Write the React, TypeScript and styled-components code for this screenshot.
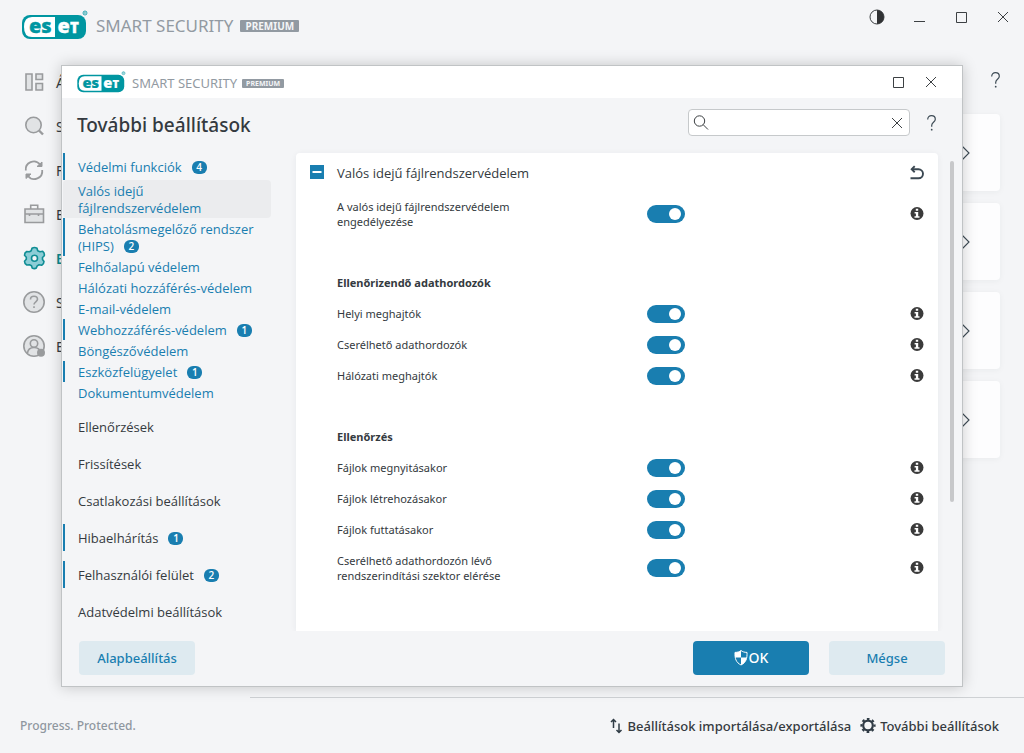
import React from "react";
import styled, { createGlobalStyle, css } from "styled-components";

const teal = "#0096a1";
const blue = "#197eb0";
const ink = "#343a40";
const narrowFont = `"Open Sans", "Noto Sans", sans-serif`;

const GlobalStyle = createGlobalStyle`
  *, *::before, *::after { box-sizing: border-box; }
  html, body { margin: 0; }
  body {
    background: #f4f5f7;
    color: ${ink};
    font-family: "Noto Sans", "Open Sans", sans-serif;
    font-size: 13px;
  }
  ul { list-style: none; margin: 0; padding: 0; }
  h1, h2, h3 { margin: 0; }
  a { color: inherit; text-decoration: none; }
  button, input { font: inherit; color: inherit; }
`;

const Page = styled.div`
  position: relative;
  display: flex;
  flex-direction: column;
  min-height: 100vh;
  overflow: hidden;
`;

const MainHeader = styled.header`
  display: flex;
  justify-content: space-between;
  align-items: flex-start;
  height: 60px;
  padding: 9px 13px 0 22px;
`;

const IconButton = styled.button`
  display: flex;
  align-items: center;
  justify-content: center;
  padding: 0;
  border: 0;
  background: none;
  cursor: pointer;
  svg { display: block; }
`;

const WindowControls = styled.div<{ $gap: number }>`
  display: flex;
  align-items: center;
  gap: ${(p) => p.$gap}px;
`;

const Brand = styled.div<{ $small?: boolean }>`
  display: flex;
  align-items: center;
  gap: ${(p) => (p.$small ? 6 : 8)}px;
  color: #929aa2;
  font-size: ${(p) => (p.$small ? 13 : 17)}px;
  line-height: ${(p) => (p.$small ? 22 : 30)}px;
  svg { display: block; overflow: visible; }
`;

const BrandName = styled.span<{ $small?: boolean }>`
  display: flex;
  align-items: center;
  gap: ${(p) => (p.$small ? 5 : 7)}px;
  padding-top: 2px;
  white-space: nowrap;
`;

const Premium = styled.span<{ $small?: boolean }>`
  padding: 0 ${(p) => (p.$small ? 4 : 5)}px;
  border-radius: 1px;
  background: #929aa2;
  color: #f4f5f7;
  font-weight: 700;
  font-size: ${(p) => (p.$small ? 7 : 10)}px;
  line-height: ${(p) => (p.$small ? 9 : 12)}px;
`;

const MainBody = styled.div`
  display: flex;
  flex: 1;
`;

const MainNav = styled.nav`
  width: 250px;
  padding-left: 22px;
`;

const MainLink = styled.a<{ $active?: boolean }>`
  display: flex;
  align-items: center;
  gap: 10px;
  height: 44px;
  font-size: 14px;
  white-space: nowrap;
  color: ${(p) => (p.$active ? "#0b8a8f" : ink)};
  font-weight: ${(p) => (p.$active ? 600 : 400)};
`;

const MainContent = styled.main`
  display: flex;
  flex: 1;
  flex-direction: column;
  padding: 12px 24px 0 0;
`;

const HelpRow = styled.div`
  display: flex;
  justify-content: flex-end;
  height: 42px;
  align-items: flex-start;
`;

const CardList = styled.div`
  display: flex;
  flex-direction: column;
  gap: 12px;
`;

const Card = styled.button`
  display: flex;
  align-items: center;
  justify-content: flex-end;
  height: 77px;
  padding: 0 30px 0 0;
  border: 0;
  border-radius: 4px;
  background: #fdfdfe;
  box-shadow: 0 1px 6px rgba(40, 50, 60, 0.05);
`;

const MainFooter = styled.footer`
  display: flex;
  justify-content: space-between;
  height: 56px;
`;

const Slogan = styled.span`
  width: 250px;
  padding-left: 20px;
  color: #8f979f;
  font-size: 12px;
  font-weight: 500;
  line-height: 58px;
`;

const FooterLinks = styled.div`
  display: flex;
  flex: 1;
  align-items: center;
  justify-content: flex-end;
  gap: 9px;
  padding-right: 25px;
  border-top: 1px solid #ced1d4;
`;

const FooterLink = styled.a`
  display: flex;
  align-items: center;
  gap: 4px;
  font-weight: 500;
  line-height: 20px;
`;

const Dialog = styled.section`
  position: absolute;
  inset: 65px 61px 66px;
  display: flex;
  flex-direction: column;
  border: 1px solid #c0c3c5;
  background: #f4f5f7;
  box-shadow: 0 0 14px rgba(0, 0, 0, 0.2);
`;

const TitleBar = styled.div`
  display: flex;
  align-items: center;
  justify-content: space-between;
  height: 32px;
  padding: 0 23px 0 15px;
  background: #fff;
`;

const DialogHeader = styled.div`
  display: flex;
  align-items: center;
  justify-content: space-between;
  height: 55px;
  padding: 0 26px 2px 15px;
`;

const DialogTitle = styled.h1`
  font-size: 19px;
  font-weight: 500;
  line-height: 28px;
`;

const HeaderTools = styled.div`
  display: flex;
  align-items: center;
  gap: 17px;
  padding-bottom: 4px;
`;

const SearchBox = styled.div`
  display: flex;
  align-items: center;
  width: 222px;
  height: 27px;
  padding: 0 4px;
  border: 1px solid #c6c9cb;
  border-radius: 4px;
  background: #fff;
`;

const SearchInput = styled.input`
  flex: 1;
  min-width: 0;
  border: 0;
  outline: 0;
  background: none;
`;

const DialogBody = styled.div`
  display: flex;
  flex: 1;
  min-height: 0;
`;

const SettingsNav = styled.nav`
  width: 234px;
  padding: 0 25px 0 1px;
  font-family: ${narrowFont};
`;

const NavLink = styled.a<{ $level: "top" | "sub"; $changed?: boolean; $selected?: boolean; $accent?: boolean }>`
  display: block;
  padding: ${(p) => (p.$level === "top" ? "6px 8px 4px 13px" : "3px 8px 1px 13px")};
  border-left: 2px solid ${(p) => (p.$changed ? blue : "transparent")};
  font-weight: 500;
  line-height: 17px;
  color: ${(p) => (p.$accent ? blue : ink)};
  ${(p) =>
    p.$selected &&
    css`
      border-radius: 4px;
      background: #ebecee;
    `}
`;

const NavList = styled.ul`
  display: flex;
  flex-direction: column;
  gap: 10px;
`;

const Badge = styled.span`
  display: inline-block;
  width: 15px;
  height: 13px;
  margin-left: 10px;
  border-radius: 6px;
  background: ${blue};
  color: #fff;
  font-size: 10px;
  font-weight: 600;
  line-height: 13px;
  text-align: center;
  vertical-align: 1px;
`;

const Panel = styled.div`
  flex: 1;
  border-radius: 4px 4px 0 0;
  background: #fff;
  box-shadow: 0 1px 6px rgba(40, 50, 60, 0.06);
  clip-path: inset(-6px -6px 0 -6px);
`;

const PanelHeader = styled.div`
  display: flex;
  align-items: center;
  gap: 13px;
  height: 38px;
  padding: 0 14px;
`;

const PanelTitle = styled.h2`
  flex: 1;
  padding-top: 2px;
  font-family: ${narrowFont};
  font-size: 13px;
  font-weight: 500;
`;

const Group = styled.section`
  padding: 0 14px 30px 41px;
`;

const GroupTitle = styled.h3`
  padding: 8px 0;
  font-size: 11px;
  font-weight: 700;
  line-height: 15px;
`;

const SettingRow = styled.div`
  display: grid;
  grid-template-columns: 310px 1fr auto;
  align-items: center;
  padding: 8px 0;
  font-size: 11px;
  line-height: 15px;
`;

const SettingLabel = styled.label`
  max-width: 210px;
`;

const Toggle = styled.input`
  appearance: none;
  display: flex;
  align-items: center;
  justify-content: flex-end;
  width: 38px;
  height: 18px;
  margin: -2px 0;
  padding: 0 4px;
  border-radius: 9px;
  background: ${blue};
  &::before {
    content: "";
    width: 12px;
    height: 12px;
    border-radius: 6px;
    background: #fff;
  }
  &:not(:checked) {
    justify-content: flex-start;
    background: #9aa1a7;
  }
`;

const ScrollTrack = styled.div`
  width: 24px;
  padding: 8px 8px 0 12px;
`;

const ScrollThumb = styled.div`
  height: 341px;
  border-radius: 2px;
  background: #c7c8ca;
`;

const DialogFooter = styled.div`
  display: flex;
  align-items: center;
  justify-content: space-between;
  height: 55px;
  padding: 0 17px 2px;
`;

const ButtonGroup = styled.div`
  display: flex;
  gap: 20px;
`;

const Button = styled.button<{ $primary?: boolean }>`
  display: flex;
  align-items: center;
  justify-content: center;
  width: 116px;
  height: 34px;
  padding: 0;
  border: 0;
  border-radius: 4px;
  background: ${(p) => (p.$primary ? blue : "#deeaf0")};
  color: ${(p) => (p.$primary ? "#fff" : blue)};
  font-size: ${(p) => (p.$primary ? 14 : 13)}px;
  font-weight: 500;
  cursor: pointer;
`;

const EsetLogo = ({ width }: { width: number }) => (
  <svg width={width} height={Math.round((width * 30) / 66)} viewBox="0 0 66 30" role="img" aria-label="ESET">
    <rect x="0" y="5" width="64" height="24" rx="8" fill={teal} />
    <path d="M33 7v20H10Q2 27 2 17T10 7z" fill="#fff" />
    <g fontFamily="Noto Sans" fontWeight="900" fontSize="20" strokeWidth=".3">
      <text x="7" y="22.500" fill={teal} stroke={teal}>es</text>
      <text x="35.500" y="22.500" fill="#fff" stroke="#fff">e<tspan fontSize="15">T</tspan></text>
    </g>
    <circle cx="63" cy="3" r="2" fill="none" stroke={teal} strokeWidth=".8" />
    <path d="M62.4 4V2.2h1q.6.5 0 1l.5.8" fill="none" stroke={teal} strokeWidth=".5" />
  </svg>
);

const BrandMark = ({ small }: { small?: boolean }) => (
  <Brand $small={small}>
    <EsetLogo width={small ? 49 : 66} />
    <BrandName $small={small}>
      SMART SECURITY <Premium $small={small}>PREMIUM</Premium>
    </BrandName>
  </Brand>
);

const Stroke = ({ size, children, w = 1 }: { size: number; children: React.ReactNode; w?: number }) => (
  <svg width={size} height={size} viewBox={`0 0 ${size} ${size}`} fill="none" stroke="#3c4043" strokeWidth={w} aria-hidden="true">
    {children}
  </svg>
);

const CloseIcon = () => (
  <Stroke size={16}><path d="M3 3l10 10M13 3L3 13" /></Stroke>
);
const MaximizeIcon = () => (
  <Stroke size={16}><path d="M3.500 3.500h10v10h-10z" /></Stroke>
);
const HelpIcon = () => (
  <svg width="9" height="16" viewBox="0 0 9 16" fill="none" stroke="#3d4b55" strokeWidth="1.200" aria-hidden="true">
    <path d="M.7 4.400C.7 2 2.300.7 4.500.7S8.300 2 8.300 4.200c0 3-3.600 3.200-3.600 6.200v1.300" />
    <circle cx="4.700" cy="14.700" r=".9" fill="#3d4b55" stroke="none" />
  </svg>
);
const ChevronIcon = () => (
  <svg width="9" height="16" viewBox="0 0 9 16" fill="none" stroke="#3d4b55" strokeWidth="1.100" aria-hidden="true">
    <path d="M.5.500L8 8 .5 15.500" />
  </svg>
);

const InfoIcon = () => (
  <svg width="14" height="14" viewBox="0 0 14 14" aria-hidden="true">
    <circle cx="7" cy="6.500" r="6.500" fill="#3a3a3a" />
    <path d="M5.800 1.800h2.400v2H5.800zM4.600 4.900h3.600v4.400h1.300v1.500H4.500V9.300h1.400V6.400H4.600z" fill="#fff" />
  </svg>
);

const NavIcon = ({ children, active }: { children: React.ReactNode; active?: boolean }) => (
  <svg width="24" height="24" viewBox="0 0 24 24" fill={active ? "#8ccdd6" : "#e1e3e5"} stroke={active ? "#0f8d94" : "#999b9d"} strokeWidth="1.600" aria-hidden="true">
    {children}
  </svg>
);

const gearPath =
  "M10 2.200Q12.500.7 15 2.200L15.700 4.700 18 5.700 20.700 5.300Q22.800 7 22.300 9.700L20.500 11.500V13.500L22 15.500Q22 18 19.700 19.300L17 18.800 15.200 19.900 14.300 22Q12.500 23.300 10.200 22L9.500 19.700 7.500 18.700 4.800 19Q2.500 17.700 2.500 15.200L4.300 13.200V11.200L2.500 9.300Q2.500 6.700 4.700 5.500L7.500 5.700 9.200 4.700z";

const mainItems = [
  { name: "Áttekintés", label: "Á", icon: <g><path d="M4 4h6v16H4zM14 4h6.500v5.500H14zM14 13.500h6.500V20H14z" /></g> },
  { name: "Számítógép ellenőrzése", label: "S", icon: <g><circle cx="11.500" cy="11" r="7.700" /><path d="M17 16.500l4 4" strokeWidth="2.400" /></g> },
  { name: "Frissítés", label: "F", icon: <g fill="none" strokeWidth="1.800"><path d="M3.800 12.500A8 8 0 0 1 18 6.500M20.200 12A8 8 0 0 1 6 18" /><path d="M20 4v4.500h-5zM4 20.500V16h5z" fill="#999b9d" strokeWidth="1" /></g> },
  { name: "Eszközök", label: "E", icon: <g><path d="M3 7h18.500v13.500H3z" /><path d="M8.700 7V3.200h7V7M3 12h18.500M7.500 12v2M16.500 12v2" fill="none" /></g> },
  { name: "Beállítások", label: "B", active: true, icon: <g><path d={gearPath} strokeLinejoin="round" /><circle cx="12.500" cy="12.200" r="3" fill="#f4f5f7" /></g> },
  { name: "Súgó és támogatás", label: "S", icon: <g><circle cx="12" cy="12" r="10.200" /><path d="M8.500 9.500C8.500 7.500 10 6.300 12 6.300s3.500 1.200 3.500 3c0 2.500-3.500 2.500-3.500 5.200" fill="none" /><path d="M12 16.200v1.800" /></g> },
  { name: "ESET HOME-fiók", label: "E", icon: <g><circle cx="12" cy="12" r="10.200" /><circle cx="12" cy="9.500" r="3.700" /><path d="M5.500 19c.5-4 3-5.500 6.500-5.500s6 1.500 6.500 5.500" fill="none" /><circle cx="19" cy="18.700" r="4" fill="#999b9d" stroke="none" /></g> },
];

const protectionItems = [
  { label: "Valós idejű fájlrendszervédelem", selected: true },
  { label: "Behatolásmegelőző rendszer (HIPS)", count: 2 },
  { label: "Felhőalapú védelem" },
  { label: "Hálózati hozzáférés-védelem" },
  { label: "E-mail-védelem" },
  { label: "Webhozzáférés-védelem", count: 1 },
  { label: "Böngészővédelem" },
  { label: "Eszközfelügyelet", count: 1 },
  { label: "Dokumentumvédelem" },
];

const otherItems = [
  { label: "Ellenőrzések" },
  { label: "Frissítések" },
  { label: "Csatlakozási beállítások" },
  { label: "Hibaelhárítás", count: 1 },
  { label: "Felhasználói felület", count: 2 },
  { label: "Adatvédelmi beállítások" },
];

const groups = [
  { title: "", rows: ["A valós idejű fájlrendszervédelem engedélyezése"] },
  { title: "Ellenőrizendő adathordozók", rows: ["Helyi meghajtók", "Cserélhető adathordozók", "Hálózati meghajtók"] },
  {
    title: "Ellenőrzés",
    rows: ["Fájlok megnyitásakor", "Fájlok létrehozásakor", "Fájlok futtatásakor", "Cserélhető adathordozón lévő rendszerindítási szektor elérése"],
  },
];

export default function App() {
  return (
    <Page>
      <GlobalStyle />
      <MainHeader>
        <BrandMark />
        <WindowControls $gap={26}>
          <IconButton aria-label="Téma">
            <Stroke size={16}><circle cx="8" cy="8" r="7" /><path d="M8 1a7 7 0 0 1 0 14z" fill="#303234" stroke="none" /></Stroke>
          </IconButton>
          <IconButton aria-label="Kis méret"><Stroke size={16}><path d="M3 12.500h11" /></Stroke></IconButton>
          <IconButton aria-label="Teljes méret"><MaximizeIcon /></IconButton>
          <IconButton aria-label="Bezárás"><CloseIcon /></IconButton>
        </WindowControls>
      </MainHeader>
      <MainBody>
        <MainNav>
          {mainItems.map((item) => (
            <MainLink key={item.name} href="#" aria-label={item.name} $active={item.active}>
              <NavIcon active={item.active}>{item.icon}</NavIcon>
              {item.label}
            </MainLink>
          ))}
        </MainNav>
        <MainContent>
          <HelpRow><IconButton aria-label="Súgó"><HelpIcon /></IconButton></HelpRow>
          <CardList>
            {["Számítógép", "Hálózat", "Internet", "Biztonsági eszközök"].map((name) => (
              <Card key={name} aria-label={name}><ChevronIcon /></Card>
            ))}
          </CardList>
        </MainContent>
      </MainBody>
      <MainFooter>
        <Slogan>Progress. Protected.</Slogan>
        <FooterLinks>
          <FooterLink href="#">
            <svg width="14" height="16" viewBox="0 0 14 16" fill="none" stroke="#2f3b45" strokeWidth="1.500" aria-hidden="true">
              <path d="M3.500 10V1.500M1 4L3.500 1.500 6 4M9 5.500V14.500M6.500 12L9 14.500l2.500-2.500" />
            </svg>
            Beállítások importálása/exportálása
          </FooterLink>
          <FooterLink href="#">
            <svg width="16" height="16" viewBox="0 0 16 16" fill="none" stroke="#2f3b45" aria-hidden="true">
              <circle cx="8" cy="7.500" r="4.800" strokeWidth="2.200" />
              <circle cx="8" cy="7.500" r="6.600" strokeWidth="2" strokeDasharray="2.590 2.590" strokeDashoffset="1.300" />
            </svg>
            További beállítások
          </FooterLink>
        </FooterLinks>
      </MainFooter>

      <Dialog role="dialog" aria-label="További beállítások">
        <TitleBar>
          <BrandMark small />
          <WindowControls $gap={17}>
            <IconButton aria-label="Teljes méret"><MaximizeIcon /></IconButton>
            <IconButton aria-label="Bezárás"><CloseIcon /></IconButton>
          </WindowControls>
        </TitleBar>
        <DialogHeader>
          <DialogTitle>További beállítások</DialogTitle>
          <HeaderTools>
            <SearchBox>
              <Stroke size={16}><circle cx="6.500" cy="6" r="5.200" /><path d="M10.200 9.700l4.800 4.800" /></Stroke>
              <SearchInput type="text" aria-label="Keresés" />
              <IconButton aria-label="Törlés"><CloseIcon /></IconButton>
            </SearchBox>
            <IconButton aria-label="Súgó"><HelpIcon /></IconButton>
          </HeaderTools>
        </DialogHeader>
        <DialogBody>
          <SettingsNav>
            <NavList>
              <li>
                <NavLink href="#" $level="top" $changed $accent>Védelmi funkciók<Badge>4</Badge></NavLink>
                <ul>
                  {protectionItems.map((item) => (
                    <li key={item.label}>
                      <NavLink href="#" $level="sub" $accent $changed={!!item.count} $selected={item.selected}>
                        {item.label}
                        {item.count && <Badge>{item.count}</Badge>}
                      </NavLink>
                    </li>
                  ))}
                </ul>
              </li>
              {otherItems.map((item) => (
                <li key={item.label}>
                  <NavLink href="#" $level="top" $changed={!!item.count}>
                    {item.label}
                    {item.count && <Badge>{item.count}</Badge>}
                  </NavLink>
                </li>
              ))}
            </NavList>
          </SettingsNav>
          <Panel>
            <PanelHeader>
              <IconButton aria-label="Összecsukás">
                <svg width="14" height="14" aria-hidden="true"><path d="M0 0h14v14H0z" fill={blue} /><path d="M2.500 6h9v2h-9z" fill="#fff" /></svg>
              </IconButton>
              <PanelTitle>Valós idejű fájlrendszervédelem</PanelTitle>
              <IconButton aria-label="Visszaállítás">
                <svg width="14" height="15" viewBox="0 0 14 15" fill="none" stroke="#3b4852" strokeWidth="1.900" aria-hidden="true">
                  <path d="M.5 13.300H8.500a4.500 4.500 0 0 0 0-9H2.500" />
                  <path d="M4.700 1.200L1.700 4.300 4.700 7.200" />
                </svg>
              </IconButton>
            </PanelHeader>
            {groups.map((group, g) => (
              <Group key={g}>
                {group.title && <GroupTitle>{group.title}</GroupTitle>}
                {group.rows.map((row, r) => (
                  <SettingRow key={row}>
                    <SettingLabel htmlFor={`setting-${g}-${r}`}>{row}</SettingLabel>
                    <Toggle id={`setting-${g}-${r}`} type="checkbox" role="switch" defaultChecked />
                    <IconButton aria-label={`Információ: ${row}`}><InfoIcon /></IconButton>
                  </SettingRow>
                ))}
              </Group>
            ))}
          </Panel>
          <ScrollTrack><ScrollThumb /></ScrollTrack>
        </DialogBody>
        <DialogFooter>
          <Button>Alapbeállítás</Button>
          <ButtonGroup>
            <Button $primary>
              <svg width="15" height="16" viewBox="0 0 15 16" aria-hidden="true">
                <path d="M7 .5c1.500 1.300 3.500 1.900 6 1.900.3 6.100-1 10.100-6 12.600C2 12.500.7 8.500 1 2.400 3.500 2.400 5.500 1.800 7 .5z" fill={blue} stroke="#fff" />
                <path d="M7 .5V7.500H1.200C.9 6 .9 4.300 1 2.400 3.500 2.400 5.500 1.800 7 .5zM7 7.500h5.700c-.6 3.500-2.300 6-5.700 7.500z" fill="#fff" />
              </svg>
              OK
            </Button>
            <Button>Mégse</Button>
          </ButtonGroup>
        </DialogFooter>
      </Dialog>
    </Page>
  );
}
